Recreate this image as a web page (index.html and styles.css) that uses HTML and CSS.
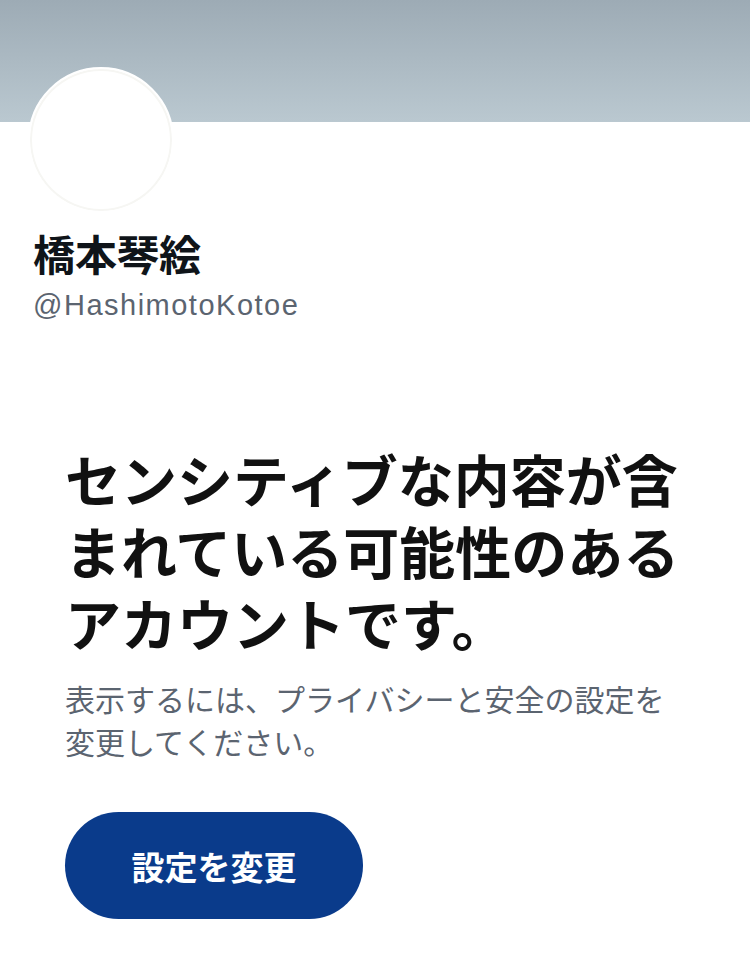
FILE: index.html
```html
<!DOCTYPE html>
<html lang="ja">
<head>
    <meta charset="UTF-8">
    <meta name="viewport" content="width=device-width, initial-scale=1.0">
    <title>橋本琴絵</title>
    <link rel="stylesheet" href="styles.css">
</head>
<body>
    <div class="banner"></div>

    <div class="profile">
        <div class="avatar"></div>
        <h1 class="name">橋本琴絵</h1>
        <div class="handle">@HashimotoKotoe</div>
    </div>

    <!-- Sensitive account notice -->
    <div class="notice">
        <h2>センシティブな内容が含まれている可能性のあるアカウントです。</h2>
        <p>表示するには、プライバシーと安全の設定を変更してください。</p>
        <button class="btn">設定を変更</button>
    </div>
</body>
</html>
```

FILE: styles.css
```css
body {
    margin: 0;
    padding: 0;
    background-color: white;
    color: #0f1419;
    font-family: "Liberation Sans", "Noto Sans CJK JP", sans-serif;
}

.banner {
    height: 122px;
    background: linear-gradient(to bottom, #9dabb5, #bac8d0);
}

.profile {
    padding: 0 33px;
}

.avatar {
    width: 142px;
    height: 142px;
    margin: -55px 0 0 -5px;
    background-color: white;
    border: 2px solid white;
    border-radius: 50%;
    box-shadow: inset 0 0 0 2px #f6f6f3;
}

.name {
    margin: 18px 0 0;
    font-size: 42px;
    line-height: 52px;
    font-weight: bold;
}

.handle {
    margin-top: 4px;
    font-size: 29px;
    line-height: 36px;
    letter-spacing: 1.5px;
    color: #5b6470;
}

.notice {
    padding: 0 65px;
    margin-top: 124px;
}

.notice h2 {
    margin: 0;
    font-size: 56px;
    line-height: 72px;
    font-weight: bold;
    color: #111;
}

.notice p {
    margin: 16px 0 0;
    font-size: 30px;
    line-height: 43px;
    color: #5b6470;
}

.btn {
    margin-top: 47px;
    width: 298px;
    height: 107px;
    border: none;
    border-radius: 54px;
    background-color: #0a3b8b;
    color: white;
    font-family: inherit;
    font-size: 33px;
    font-weight: bold;
    cursor: pointer;
}
```
